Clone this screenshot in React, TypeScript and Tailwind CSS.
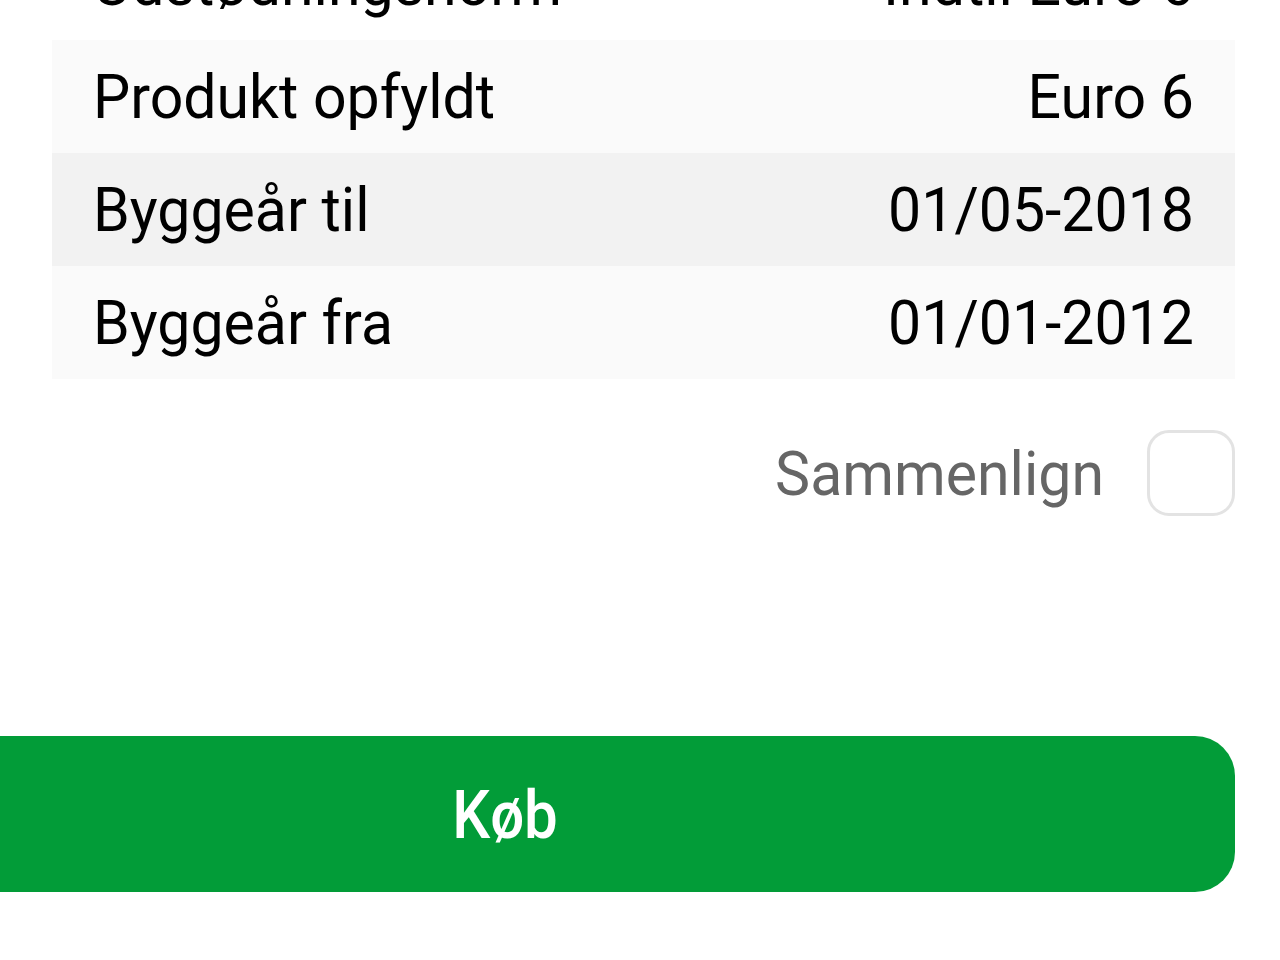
import React from "react";

const rows: { label: string; value: string; bg: string }[] = [
  { label: "Udstødningsnorm", value: "Indtil Euro 6", bg: "bg-white" },
  { label: "Produkt opfyldt", value: "Euro 6", bg: "bg-[#fafafa]" },
  { label: "Byggeår til", value: "01/05-2018", bg: "bg-[#f2f2f2]" },
  { label: "Byggeår fra", value: "01/01-2012", bg: "bg-[#fafafa]" },
];

export default function App() {
  return (
    <div
      className="w-[1280px] h-[960px] overflow-hidden bg-white text-black"
      style={{ fontFamily: "Roboto, 'Noto Sans', sans-serif" }}
    >
      <div className="mt-[-73px] pl-[52px] pr-[45px] flex flex-col">
        {rows.map((r) => (
          <div
            key={r.label}
            className={`h-[113px] flex items-center justify-between px-[41px] text-[59px] leading-none ${r.bg}`}
          >
            <span className="scale-y-[1.04]">{r.label}</span>
            <span className="scale-y-[1.04]">{r.value}</span>
          </div>
        ))}
      </div>
      <div className="pr-[45px] mt-[51px] flex items-center justify-end gap-[43px]">
        <span className="text-[59px] leading-none text-[#666666] scale-y-[1.04]">Sammenlign</span>
        <div className="w-[88px] h-[86px] rounded-[22px] border-[3px] border-[#e3e3e3] bg-white" />
      </div>
      <div className="mt-[220px] ml-[-225px] w-[1460px] h-[156px] rounded-[40px] bg-[#029c38] flex items-center justify-center">
        <span className="text-white text-[60px] font-medium leading-none scale-y-[1.12] translate-y-[2px]">Køb</span>
      </div>
    </div>
  );
}
